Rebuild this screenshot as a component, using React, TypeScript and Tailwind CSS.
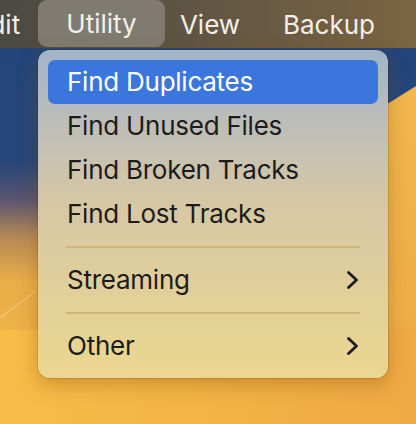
import React from "react";

const font = { fontFamily: "Inter, 'Noto Sans', sans-serif" };

function Chevron() {
  return (
    <svg width="14" height="20" viewBox="0 0 14 20" fill="none">
      <path d="M2.5 2.5 L10.5 10 L2.5 17.5" stroke="#1c1c1c" strokeWidth="2.8" strokeLinecap="round" strokeLinejoin="round" />
    </svg>
  );
}

function Wallpaper() {
  return (
    <svg className="absolute inset-0" width="416" height="424" viewBox="0 0 416 424">
      <defs>
        <linearGradient id="wl" x1="0" y1="0" x2="0" y2="1">
          <stop offset="0" stopColor="#23457a" />
          <stop offset="0.38" stopColor="#25467a" />
          <stop offset="0.47" stopColor="#5a5570" />
          <stop offset="0.56" stopColor="#b58a55" />
          <stop offset="0.66" stopColor="#e8ad48" />
          <stop offset="1" stopColor="#f7bc48" />
        </linearGradient>
        <linearGradient id="wy" x1="0" y1="0" x2="1" y2="1">
          <stop offset="0" stopColor="#f4c456" />
          <stop offset="1" stopColor="#efa943" />
        </linearGradient>
        <linearGradient id="wb" x1="0" y1="0" x2="1" y2="0">
          <stop offset="0" stopColor="#f7bd48" />
          <stop offset="1" stopColor="#f0a944" />
        </linearGradient>
      </defs>
      <rect width="416" height="424" fill="url(#wl)" />
      <polygon points="250,190 416,86 416,424 250,424" fill="url(#wy)" />
      <rect x="0" y="330" width="416" height="94" fill="url(#wb)" />
      <line x1="0" y1="318" x2="36" y2="291" stroke="rgba(255,240,200,0.3)" strokeWidth="1.5" />
    </svg>
  );
}

function Item({ label, active, sub }: { label: string; active?: boolean; sub?: boolean }) {
  return (
    <div
      className={`flex h-[44px] items-center justify-between rounded-[7px] pl-[19px] pr-[18px] text-[26px] leading-none ${
        active ? "bg-[#3b76dc] text-white" : "text-[#1c1c1c]"
      }`}
    >
      <span className="tracking-[-0.25px]">{label}</span>
      {sub && <Chevron />}
    </div>
  );
}

function Sep() {
  return (
    <div className="flex h-[22px] items-center px-[18px]">
      <div className="h-[2px] w-full bg-[#cfb877]" />
    </div>
  );
}

export default function App() {
  return (
    <div className="relative h-[424px] w-[416px] overflow-hidden" style={font}>
      <Wallpaper />
      <div className="relative flex h-[48px] items-center bg-gradient-to-r from-[#4a4944] to-[#7b6441] text-[26px] text-[#f2efe9]">
        <div className="ml-[-44px] w-[82px] text-center">Edit</div>
        <div className="flex h-[47px] w-[127px] items-center justify-center self-start rounded-[9px] bg-[#7f7b71]">Utility</div>
        <div className="w-[90px] text-center">View</div>
        <div className="w-[148px] text-center">Backup</div>
      </div>
      <div className="absolute left-[38px] top-[50px] w-[350px] rounded-[12px] bg-gradient-to-b from-[#a3b4c9] via-[#d6c7a5] via-45% to-[#ebd78f] p-[10px] shadow-[0_6px_20px_rgba(120,70,0,0.35)] ring-1 ring-black/10">
        <Item label="Find Duplicates" active />
        <Item label="Find Unused Files" />
        <Item label="Find Broken Tracks" />
        <Item label="Find Lost Tracks" />
        <Sep />
        <Item label="Streaming" sub />
        <Sep />
        <Item label="Other" sub />
      </div>
    </div>
  );
}
